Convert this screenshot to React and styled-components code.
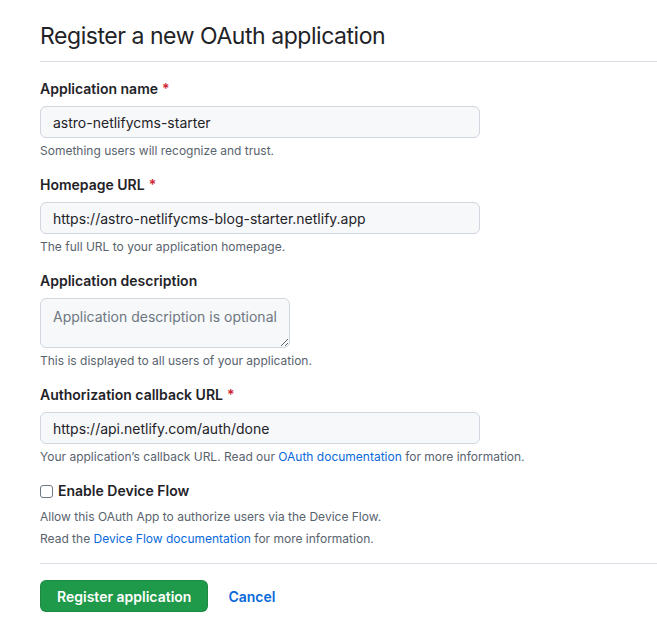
import React from 'react'
import styled, { createGlobalStyle } from 'styled-components'

const GlobalStyle = createGlobalStyle`
  body {
    margin: 0;
    background: #ffffff;
    font-family: Inter, "Liberation Sans", Arial, sans-serif;
    color: #1f2328;
    font-size: 14px;
  }
`

const Page = styled.div`
  padding: 18px 0 20px 40px;
  overflow: hidden;
`

const Subhead = styled.div`
  border-bottom: 1px solid #d8dee4;
  padding-bottom: 7px;
  margin-bottom: 17px;
`

const Title = styled.h2`
  margin: 0;
  font-size: 23px;
  font-weight: 400;
  line-height: 36px;
  letter-spacing: -0.45px;
`

const FormGroup = styled.div`
  margin-bottom: 15px;
`

const Label = styled.label`
  display: block;
  font-weight: 600;
  line-height: 20px;
  margin-bottom: 7px;
`

const Required = styled.span`
  color: #cf222e;
  margin-left: 4px;
`

const Input = styled.input`
  display: block;
  box-sizing: border-box;
  width: 440px;
  height: 32px;
  padding: 5px 12px;
  font: inherit;
  font-size: 14px;
  line-height: 20px;
  color: #1f2328;
  background: #f6f8fa;
  border: 1px solid #d0d7de;
  border-radius: 6px;
  outline: none;
`

const TextArea = styled.textarea`
  display: block;
  box-sizing: border-box;
  width: 250px;
  height: 50px;
  padding: 8px 12px;
  font: inherit;
  font-size: 14px;
  line-height: 20px;
  color: #1f2328;
  background: #f6f8fa;
  border: 1px solid #d0d7de;
  border-radius: 6px;
  outline: none;
  resize: both;
  &::placeholder {
    color: #6e7781;
  }
`

const Note = styled.p`
  margin: ${(p) => (p.$tight ? '0' : '4px 0 0')};
  font-size: 12px;
  line-height: ${(p) => (p.$tight ? '22px' : '18px')};
  color: #59636e;
`

const Link = styled.a`
  color: #0969da;
  text-decoration: none;
  font-weight: ${(p) => (p.$bold ? 600 : 'inherit')};
`

const CheckRow = styled.label`
  display: flex;
  align-items: center;
  gap: 5px;
  font-weight: 600;
  line-height: 20px;
  margin-bottom: 5px;
`

const Checkbox = styled.span`
  width: 11px;
  height: 11px;
  border: 1px solid #6e7781;
  border-radius: 3px;
  background: #fff;
`

const Divider = styled.hr`
  border: 0;
  border-top: 1px solid #d8dee4;
  margin: 13px 0 16px;
`

const Actions = styled.div`
  display: flex;
  align-items: center;
  gap: 20px;
`

const PrimaryButton = styled.button`
  height: 32px;
  padding: 0 16px;
  font: inherit;
  font-size: 14px;
  font-weight: 600;
  color: #ffffff;
  background: #1f9a4a;
  border: 1px solid rgba(31, 35, 40, 0.15);
  border-radius: 6px;
`

const fields = [
  {
    label: 'Application name',
    value: 'astro-netlifycms-starter',
    note: 'Something users will recognize and trust.'
  },
  {
    label: 'Homepage URL',
    value: 'https://astro-netlifycms-blog-starter.netlify.app',
    note: 'The full URL to your application homepage.'
  }
]

export default function App() {
  return (
    <>
      <GlobalStyle />
      <Page>
        <Subhead>
          <Title>Register a new OAuth application</Title>
        </Subhead>

        {fields.map((f) => (
          <FormGroup key={f.label}>
            <Label>
              {f.label}
              <Required>*</Required>
            </Label>
            <Input defaultValue={f.value} />
            <Note>{f.note}</Note>
          </FormGroup>
        ))}

        <FormGroup>
          <Label>Application description</Label>
          <TextArea placeholder="Application description is optional" />
          <Note>This is displayed to all users of your application.</Note>
        </FormGroup>

        <FormGroup>
          <Label>
            Authorization callback URL
            <Required>*</Required>
          </Label>
          <Input defaultValue="https://api.netlify.com/auth/done" />
          <Note>
            Your application’s callback URL. Read our <Link href="#">OAuth documentation</Link> for more information.
          </Note>
        </FormGroup>

        <div>
          <CheckRow>
            <Checkbox />
            Enable Device Flow
          </CheckRow>
          <Note $tight>Allow this OAuth App to authorize users via the Device Flow.</Note>
          <Note $tight>
            Read the <Link href="#">Device Flow documentation</Link> for more information.
          </Note>
        </div>

        <Divider />

        <Actions>
          <PrimaryButton>Register application</PrimaryButton>
          <Link href="#" $bold>Cancel</Link>
        </Actions>
      </Page>
    </>
  )
}
